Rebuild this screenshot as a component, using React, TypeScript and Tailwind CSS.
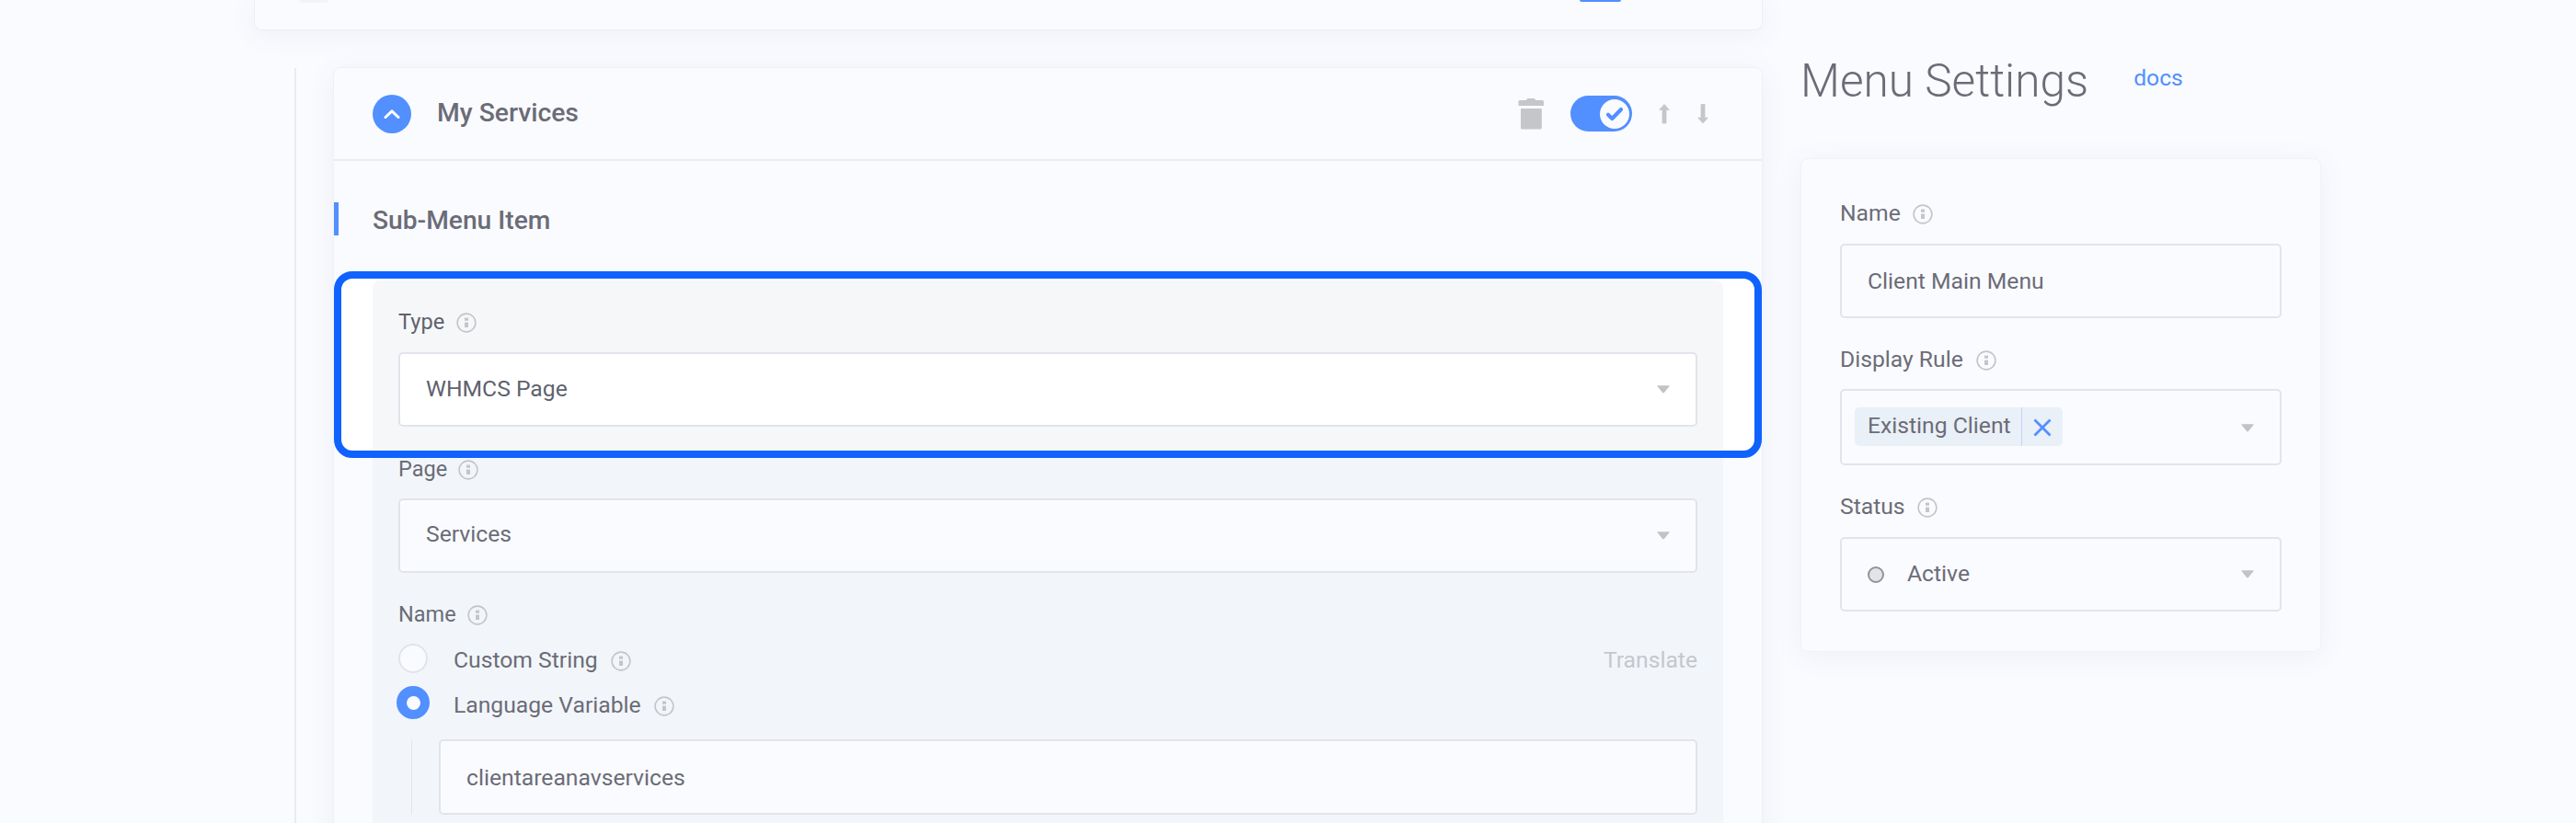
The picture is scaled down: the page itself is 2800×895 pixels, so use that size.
import React from "react";

function InfoIcon() {
  return (
    <svg width="22" height="22" viewBox="0 0 22 22" className="block shrink-0">
      <circle cx="11" cy="11" r="9.9" fill="none" stroke="#c4c5ca" strokeWidth="1.6" />
      <rect x="9" y="5.6" width="4" height="3.2" fill="#c4c5ca" />
      <rect x="9" y="10.6" width="4" height="5.4" fill="#c4c5ca" />
    </svg>
  );
}

function Caret() {
  return (
    <svg width="14" height="9" viewBox="0 0 14 9" className="block shrink-0">
      <path d="M.6.3h12.800q.5.4 0 1L7.900 8q-.9.800-1.800 0L.600 1.300q-.5-.6 0-1z" fill="#c2c3c7" />
    </svg>
  );
}

function Label({ text, gap = "gap-[14px]", className = "" }: { text: string; gap?: string; className?: string }) {
  return (
    <div className={`flex h-7 items-center ${gap} ${className}`}>
      <span className="leading-7">{text}</span>
      <span className="pt-0.5">
        <InfoIcon />
      </span>
    </div>
  );
}

function Toggle() {
  return (
    <div className="flex h-[39px] w-[67px] items-center justify-end rounded-full bg-[#528fff] pr-[3px]">
      <div className="flex size-8 items-center justify-center rounded-full bg-[#fafbff]">
        <svg width="20" height="18" viewBox="0 0 20 18">
          <path d="M3 9.800l4.300 4.200L17 4" fill="none" stroke="#528fff" strokeWidth="4.200" strokeLinecap="round" strokeLinejoin="round" />
        </svg>
      </div>
    </div>
  );
}

function MenuItem() {
  return (
    <div className="h-[850px] w-[1554px] rounded-lg border border-[#edf1f7] bg-[#fafbff] shadow-[0_4px_30px_rgba(60,80,120,0.07)]">
      <div className="flex h-[101px] items-center border-b-2 border-[#e9edf2] pr-[58px] pl-[42px]">
        <div className="flex size-[42px] items-center justify-center rounded-full bg-[#528fff]">
          <svg width="18" height="12" viewBox="0 0 18 12">
            <path d="M2 9.500L9 2.800l7 6.700" fill="none" stroke="#fff" strokeWidth="3" strokeLinecap="round" strokeLinejoin="round" />
          </svg>
        </div>
        <div className="mb-px ml-7 flex-1 text-[28.3px] font-medium leading-10">My Services</div>
        <svg width="28" height="34" viewBox="0 0 28 34" className="mr-[29px]">
          <path d="M1.500 2H8.500L10.500 0h7l2 2h7Q28 2 28 3.500V8H.5V3.500Q.5 2 1.500 2zM3 11h22.800V32q0 1.500-1.500 1.500H4.500Q3 33.500 3 32z" fill="#c5c6ca" />
        </svg>
        <Toggle />
        <svg width="12" height="22" viewBox="0 0 12 22" className="ml-[29px]">
          <path d="M6 .5L11.300 6.400H8V21H4V6.400H.700z" fill="#c5c6ca" stroke="#c5c6ca" strokeWidth=".8" strokeLinejoin="round" />
        </svg>
        <svg width="12" height="22" viewBox="0 0 12 22" className="ml-[30px]">
          <path d="M6 21l5.300-5.900H8V.5H4v14.600H.700z" fill="#c5c6ca" stroke="#c5c6ca" strokeWidth=".8" strokeLinejoin="round" />
        </svg>
      </div>
      <div className="mt-[45px] flex h-9 items-center">
        <div className="h-9 w-[5px] bg-[#528fff]" />
        <div className="mt-[3px] ml-[37px] text-[28.2px] font-medium leading-9">Sub-Menu Item</div>
      </div>
      <div className="mt-[39px] h-[203px] w-[1552px] rounded-[20px] border-8 border-[#0f62fe] bg-white pt-0.5 pr-[34px] pl-[34px]">
        <div className="h-[185px] rounded-t-lg bg-[#f6f7f9] px-7 pt-[31px]">
          <Label text="Type" gap="gap-[13px]" className="text-[23.600px] text-[#5f626e]" />
          <div className="mt-[19px] flex h-[81px] items-center justify-between rounded-[5px] border-2 border-[#e2e4ec] bg-white pr-[28px] pl-[28px]">
            <span className="mb-0.5 text-[#5f626e]">WHMCS Page</span>
            <Caret />
          </div>
        </div>
      </div>
      <div className="mr-[42px] ml-[42px] h-[410px] bg-[#f2f6fa] px-7">
        <div className="flex h-11 items-start text-[23.500px]">
          <Label text="Page" className="-mt-0.5" gap="gap-[12px]" />
        </div>
        <div className="flex h-[81px] items-center justify-between rounded-[5px] border-2 border-[#e2e4ea] bg-[#fafbff] pr-7 pl-7">
          <span className="mb-[3px]">Services</span>
          <Caret />
        </div>
        <Label text="Name" gap="gap-[12px]" className="mt-[31px] text-[23.500px]" />
        <div className="mt-[17px] flex h-[34px] items-center">
          <div className="size-8 rounded-full border-2 border-[#e2e4ea] bg-[#fafbff]" />
          <Label text="Custom String" className="mt-1 ml-[28px]" />
          <span className="mt-1 ml-auto text-[#c6c7cc]">Translate</span>
        </div>
        <div className="mt-[13px] -ml-0.5 flex h-9 items-center">
          <div className="flex size-9 items-center justify-center rounded-full bg-[#528fff]">
            <div className="size-[15px] rounded-full bg-[#fafbff]" />
          </div>
          <Label text="Language Variable" className="mt-[5px] ml-[26px]" />
        </div>
        <div className="mt-[22px] ml-[14px] flex h-[82px] border-l border-[#e2e4ea]">
          <div className="ml-[29px] flex flex-1 items-center rounded-[5px] border-2 border-[#e2e4ea] bg-[#fafbff] pt-px pl-7">
            clientareanavservices
          </div>
        </div>
      </div>
    </div>
  );
}

function Settings() {
  return (
    <div className="w-[566px]">
      <div className="flex h-[172px] items-start">
        <h1 className="mt-[59px] text-[49.600px] font-light leading-[58px]">Menu Settings</h1>
        <a className="mt-[71px] ml-[49px] leading-7 text-[#528fff]">docs</a>
      </div>
      <div className="h-[537px] rounded-lg border border-[#edf3f8] bg-[#fafbff] px-[42px] pt-[45px] shadow-[0_4px_30px_rgba(60,80,120,0.07)]">
        <Label text="Name" gap="gap-[13px]" />
        <div className="mt-[19px] flex h-[81px] items-center rounded-[5px] border-2 border-[#e2e4ec] px-[28px]">Client Main Menu</div>
        <Label text="Display Rule" gap="gap-[14px]" className="mt-[31px]" />
        <div className="mt-[18px] flex h-[83px] items-center justify-between rounded-[5px] border-2 border-[#e2e4ec] pr-[28px] pl-[14px]">
          <div className="mb-0.5 flex h-[42px] rounded-[5px] bg-[#eaf0f7]">
            <span className="w-[182px] border-r border-[#bcd3fb] pl-[14px] leading-[39px]">Existing Client</span>
            <span className="flex w-11 items-center justify-center pt-0.5">
              <svg width="20" height="20" viewBox="0 0 20 20">
                <path d="M1.500 1.500l17 17M18.500 1.500l-17 17" stroke="#528fff" strokeWidth="2.800" />
              </svg>
            </span>
          </div>
          <span className="pt-0.5">
            <Caret />
          </span>
        </div>
        <Label text="Status" gap="gap-[13px]" className="mt-[31px]" />
        <div className="mt-[19px] flex h-[81px] items-center rounded-[5px] border-2 border-[#e2e4ec] pr-[28px] pl-[28px]">
          <div className="size-[18px] rounded-full border-2 border-[#929399] bg-[#e2e3e9]" />
          <span className="mb-0.5 ml-[25px] flex-1">Active</span>
          <Caret />
        </div>
      </div>
    </div>
  );
}

export default function App() {
  return (
    <div className="flex h-[895px] w-[2800px] gap-[41px] overflow-hidden bg-[#fafbff] pl-[276px] font-['Roboto',sans-serif] text-[24.700px] text-[#6b6c77]">
      <div className="w-[1640px]">
        <div className="flex h-[33px] items-start rounded-b-lg border border-t-0 border-[#e9eff6] bg-[#fafbff] pr-[153px] pl-[48px] shadow-[0_4px_30px_rgba(60,80,120,0.07)]">
          <div className="h-[3px] w-8 rounded-b-full bg-[#f3f4f7]" />
          <div className="ml-auto h-0.5 w-[45px] rounded-b-full bg-[#528fff]" />
        </div>
        <div className="mt-10 flex pl-11">
          <div className="mt-px h-[850px] w-0.5 bg-[#e9ebf1]" />
          <div className="ml-10 shrink-0">
            <MenuItem />
          </div>
        </div>
      </div>
      <Settings />
    </div>
  );
}
